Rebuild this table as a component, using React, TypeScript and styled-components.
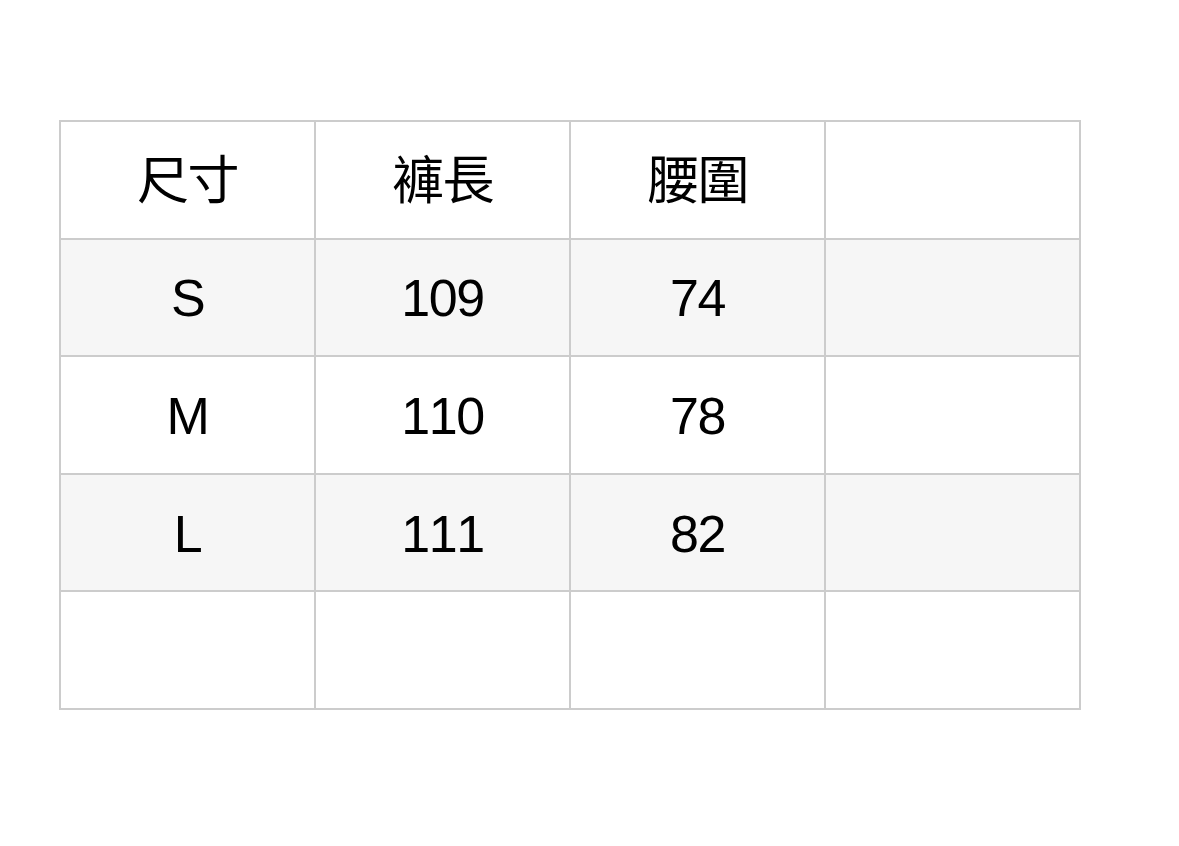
import React from "react";
import styled, { createGlobalStyle } from "styled-components";

const Global = createGlobalStyle`
  html, body { margin: 0; padding: 0; background: #fff; }
  body { font-family: "Liberation Sans", "Noto Sans CJK TC", sans-serif; }
`;

const Page = styled.div`
  padding: 120px 0 0 59px;
`;

const Table = styled.table`
  border-collapse: collapse;
  table-layout: fixed;
  width: 1022px;
`;

const Row = styled.tr<{ $shaded: boolean }>`
  height: 117.6px;
  background: ${(p) => (p.$shaded ? "#f6f6f6" : "#ffffff")};
`;

const Cell = styled.td`
  border: 2px solid #cccccc;
  padding: 2px 0 0 0;
  text-align: center;
  vertical-align: middle;
  font-family: "Liberation Sans", "Noto Sans CJK TC", sans-serif;
  font-size: 52px;
  font-kerning: none;
  letter-spacing: -1.5px;
  color: #000;
  line-height: 1;
`;

const rows: string[][] = [
  ["尺寸", "褲長", "腰圍", ""],
  ["S", "109", "74", ""],
  ["M", "110", "78", ""],
  ["L", "111", "82", ""],
  ["", "", "", ""],
];

export default function App() {
  return (
    <>
      <Global />
      <Page>
        <Table>
          <tbody>
            {rows.map((r, i) => (
              <Row key={i} $shaded={i % 2 === 1}>
                {r.map((c, j) => (
                  <Cell key={j}>{c}</Cell>
                ))}
              </Row>
            ))}
          </tbody>
        </Table>
      </Page>
    </>
  );
}
